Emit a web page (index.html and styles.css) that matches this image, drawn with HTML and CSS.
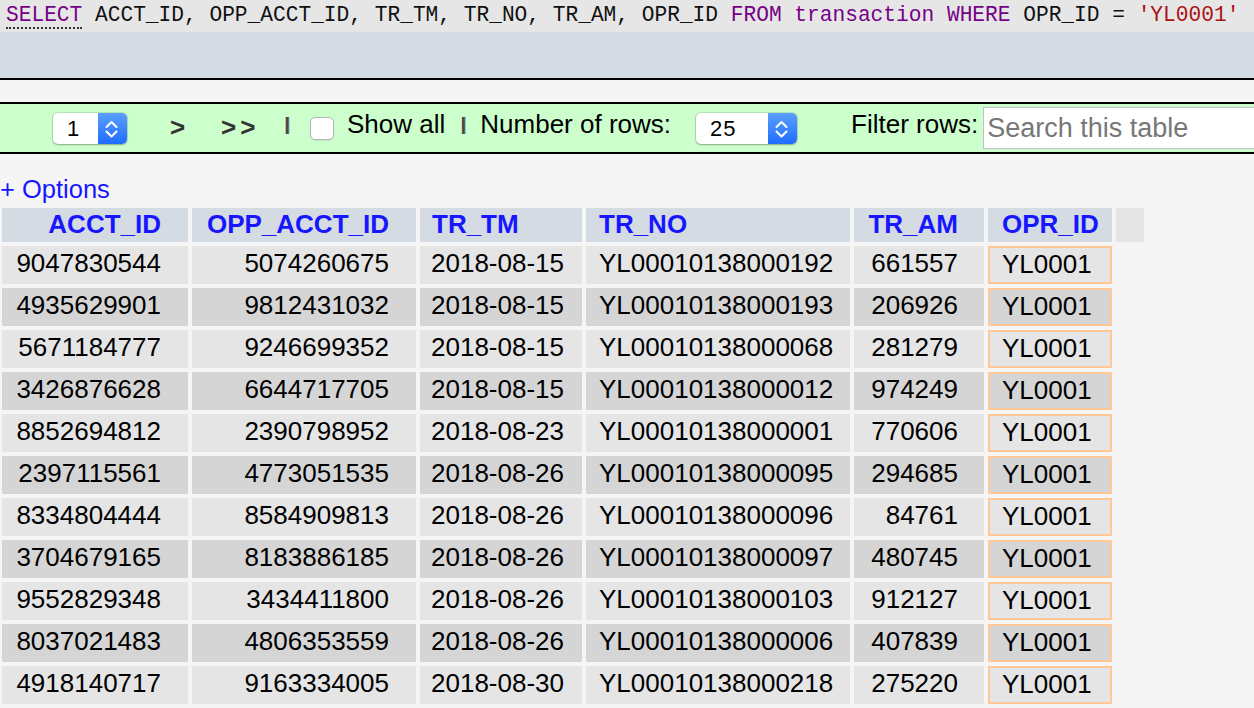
FILE: index.html
```html
<!DOCTYPE html>
<html>
<head>
<meta charset="utf-8">
<title>transaction</title>
<link rel="stylesheet" href="styles.css">
</head>
<body>
<div class="sql"><span class="kw link">SELECT</span> ACCT_ID, OPP_ACCT_ID, TR_TM, TR_NO, TR_AM, OPR_ID <span class="kw">FROM</span> <span class="kw">transaction</span> <span class="kw">WHERE</span> OPR_ID = <span class="str">'YL0001'</span></div>
<div class="tools"></div>
<div class="gap"></div>
<div class="navbar">
  <div class="sel sel1"><span class="val">1</span><span class="arr"><svg width="29" height="31" viewBox="0 0 29 31"><polyline points="8.5,14 13.5,9 18.5,14" /><polyline points="8.5,18.5 13.5,23.5 18.5,18.5" /></svg></span></div>
  <span class="nav nav-next">&gt;</span>
  <span class="nav nav-last">&gt;&gt;</span>
  <span class="sep sep1">|</span>
  <input type="checkbox" class="chk">
  <span class="lbl lbl-show">Show all</span>
  <span class="sep sep2">|</span>
  <span class="lbl lbl-num">Number of rows:</span>
  <div class="sel sel25"><span class="val">25</span><span class="arr"><svg width="29" height="31" viewBox="0 0 29 31"><polyline points="8.5,14 13.5,9 18.5,14" /><polyline points="8.5,18.5 13.5,23.5 18.5,18.5" /></svg></span></div>
  <span class="lbl lbl-filter">Filter rows:</span>
  <input type="text" class="search" placeholder="Search this table">
</div>
<div class="options">+ Options</div>
<table class="data">
  <thead>
    <tr>
      <th class="c1">ACCT_ID</th>
      <th class="c2">OPP_ACCT_ID</th>
      <th class="c3">TR_TM</th>
      <th class="c4">TR_NO</th>
      <th class="c5">TR_AM</th>
      <th class="c6">OPR_ID</th>
      <th class="c7"></th>
    </tr>
  </thead>
  <tbody>
    <tr class="odd"><td class="p1">9047830544</td><td class="p2">5074260675</td><td class="p3">2018-08-15</td><td class="p4">YL00010138000192</td><td class="p5">661557</td><td class="opr">YL0001</td></tr>
    <tr class="even"><td class="p1">4935629901</td><td class="p2">9812431032</td><td class="p3">2018-08-15</td><td class="p4">YL00010138000193</td><td class="p5">206926</td><td class="opr">YL0001</td></tr>
    <tr class="odd"><td class="p1">5671184777</td><td class="p2">9246699352</td><td class="p3">2018-08-15</td><td class="p4">YL00010138000068</td><td class="p5">281279</td><td class="opr">YL0001</td></tr>
    <tr class="even"><td class="p1">3426876628</td><td class="p2">6644717705</td><td class="p3">2018-08-15</td><td class="p4">YL00010138000012</td><td class="p5">974249</td><td class="opr">YL0001</td></tr>
    <tr class="odd"><td class="p1">8852694812</td><td class="p2">2390798952</td><td class="p3">2018-08-23</td><td class="p4">YL00010138000001</td><td class="p5">770606</td><td class="opr">YL0001</td></tr>
    <tr class="even"><td class="p1">2397115561</td><td class="p2">4773051535</td><td class="p3">2018-08-26</td><td class="p4">YL00010138000095</td><td class="p5">294685</td><td class="opr">YL0001</td></tr>
    <tr class="odd"><td class="p1">8334804444</td><td class="p2">8584909813</td><td class="p3">2018-08-26</td><td class="p4">YL00010138000096</td><td class="p5">84761</td><td class="opr">YL0001</td></tr>
    <tr class="even"><td class="p1">3704679165</td><td class="p2">8183886185</td><td class="p3">2018-08-26</td><td class="p4">YL00010138000097</td><td class="p5">480745</td><td class="opr">YL0001</td></tr>
    <tr class="odd"><td class="p1">9552829348</td><td class="p2">3434411800</td><td class="p3">2018-08-26</td><td class="p4">YL00010138000103</td><td class="p5">912127</td><td class="opr">YL0001</td></tr>
    <tr class="even"><td class="p1">8037021483</td><td class="p2">4806353559</td><td class="p3">2018-08-26</td><td class="p4">YL00010138000006</td><td class="p5">407839</td><td class="opr">YL0001</td></tr>
    <tr class="odd"><td class="p1">4918140717</td><td class="p2">9163334005</td><td class="p3">2018-08-30</td><td class="p4">YL00010138000218</td><td class="p5">275220</td><td class="opr">YL0001</td></tr>
  </tbody>
</table>
</body>
</html>
```
FILE: styles.css
```css
html, body {
  margin: 0;
  padding: 0;
  background: #f5f5f5;
  overflow: hidden;
  font-family: "Liberation Sans", Arial, Helvetica, sans-serif;
  color: #000;
}

.sql {
  height: 32px;
  box-sizing: border-box;
  background: #e6e6e6;
  padding-left: 6px;
  font-family: "Liberation Mono", "Courier New", monospace;
  font-size: 21.2px;
  line-height: 30px;
  white-space: nowrap;
  color: #111;
}
.sql .kw { color: #770088; }
.sql .str { color: #aa1111; }
.sql .link { border-bottom: 2px dotted #333; }

.tools {
  height: 46px;
  background: #d4dbe2;
  border-bottom: 2px solid #000;
}
.gap {
  height: 22px;
  background: #f5f5f5;
}

.navbar {
  display: flex;
  align-items: center;
  height: 48px;
  background: #ccffcc;
  border-top: 2px solid #000;
  border-bottom: 2px solid #000;
  padding-left: 53px;
  white-space: nowrap;
}

.sel {
  flex: none;
  display: flex;
  height: 31px;
  background: #fff;
  border-radius: 5px;
  box-shadow: 0 0 0 1px rgba(0,0,0,0.10), 0 1px 2px rgba(0,0,0,0.25);
  overflow: hidden;
}
.sel .val {
  flex: 1;
  padding-left: 14px;
  font-size: 22px;
  line-height: 31px;
  letter-spacing: 1px;
}
.sel .arr {
  width: 29px;
  height: 31px;
  background: linear-gradient(#5aa0ff, #1f6cff);
}
.sel svg { display: block; }
.sel polyline {
  fill: none;
  stroke: #fff;
  stroke-width: 2;
  stroke-linecap: round;
  stroke-linejoin: round;
}
.sel1 { width: 74px; }
.sel25 { width: 101px; margin-left: 25px; }

.nav {
  flex: none;
  font-size: 26px;
  font-weight: bold;
  color: #333;
  line-height: 29px;
  margin-bottom: 2px;
}
.nav-next { margin-left: 43px; width: 16px; }
.nav-last { margin-left: 35px; width: 40px; letter-spacing: 4px; }

.sep {
  flex: none;
  width: 6px;
  text-align: center;
  font-size: 19px;
  font-weight: bold;
  color: #4a4a4a;
  line-height: 20px;
  margin-bottom: 8px;
  text-shadow: 1px 0 0 #777;
}
.sep1 { margin-left: 23px; }
.sep2 { margin-left: 15px; }

.chk {
  flex: none;
  -webkit-appearance: none;
  appearance: none;
  width: 24px;
  height: 23px;
  margin: 0 0 0 20px;
  background: #fff;
  border: 1px solid #b3b3b3;
  border-radius: 5px;
  box-sizing: border-box;
  box-shadow: 0 1px 1px rgba(0,0,0,0.08);
}

.lbl {
  flex: none;
  font-size: 26px;
  line-height: 29px;
  margin-bottom: 8px;
}
.lbl-show { margin-left: 13px; }
.lbl-num { margin-left: 14px; }
.lbl-filter { margin-left: 54px; }

.search {
  flex: none;
  width: 320px;
  height: 42px;
  box-sizing: border-box;
  margin: 0 0 0 5px;
  padding: 0 3px;
  border: 1px solid #c2c2c2;
  background: #fff;
  font-family: "Liberation Sans", Arial, sans-serif;
  font-size: 27px;
  outline: none;
}
.search::placeholder { color: #777; }

.options {
  margin-top: 20px;
  height: 30px;
  font-size: 25.5px;
  line-height: 30px;
  color: #1717ff;
}

.data {
  table-layout: fixed;
  width: 1150px;
  margin-left: -2px;
  border-collapse: separate;
  border-spacing: 4px;
  font-size: 26px;
}
.data th, .data td {
  box-sizing: border-box;
  vertical-align: top;
  white-space: nowrap;
  overflow: hidden;
}
.data th {
  background: #d4dbe2;
  color: #1717ff;
  font-weight: bold;
  line-height: 32px;
  height: 34px;
}
.data th.c7 { background: #e5e5e5; padding: 0; }

.data th.c1 { width: 186px; text-align: right; padding: 0 27px 2px 0; }
.data th.c2 { width: 224px; text-align: right; padding: 0 27px 2px 0; }
.data th.c3 { width: 162px; text-align: left; padding: 0 0 2px 12px; }
.data th.c4 { width: 264px; text-align: left; padding: 0 0 2px 13px; }
.data th.c5 { width: 130px; text-align: right; padding: 0 26px 2px 0; }
.data th.c6 { width: 124px; text-align: left; padding: 0 0 2px 14px; }
.data th.c7 { width: 28px; }

.data td {
  line-height: 34px;
  height: 38px;
}
.data tr.odd td { background: #e5e5e5; }
.data tr.even td { background: #d5d5d5; }
.data td.p1, .data td.p2 { text-align: right; padding: 0 27px 4px 0; }
.data td.p3 { text-align: left; padding: 0 0 4px 11px; }
.data td.p4 { text-align: left; padding: 0 0 4px 13px; }
.data td.p5 { text-align: right; padding: 0 26px 4px 0; }
.data td.opr {
  text-align: left;
  border: 2px solid #ffc896;
  padding: 0 0 2px 12px;
  line-height: 32px;
}
```
